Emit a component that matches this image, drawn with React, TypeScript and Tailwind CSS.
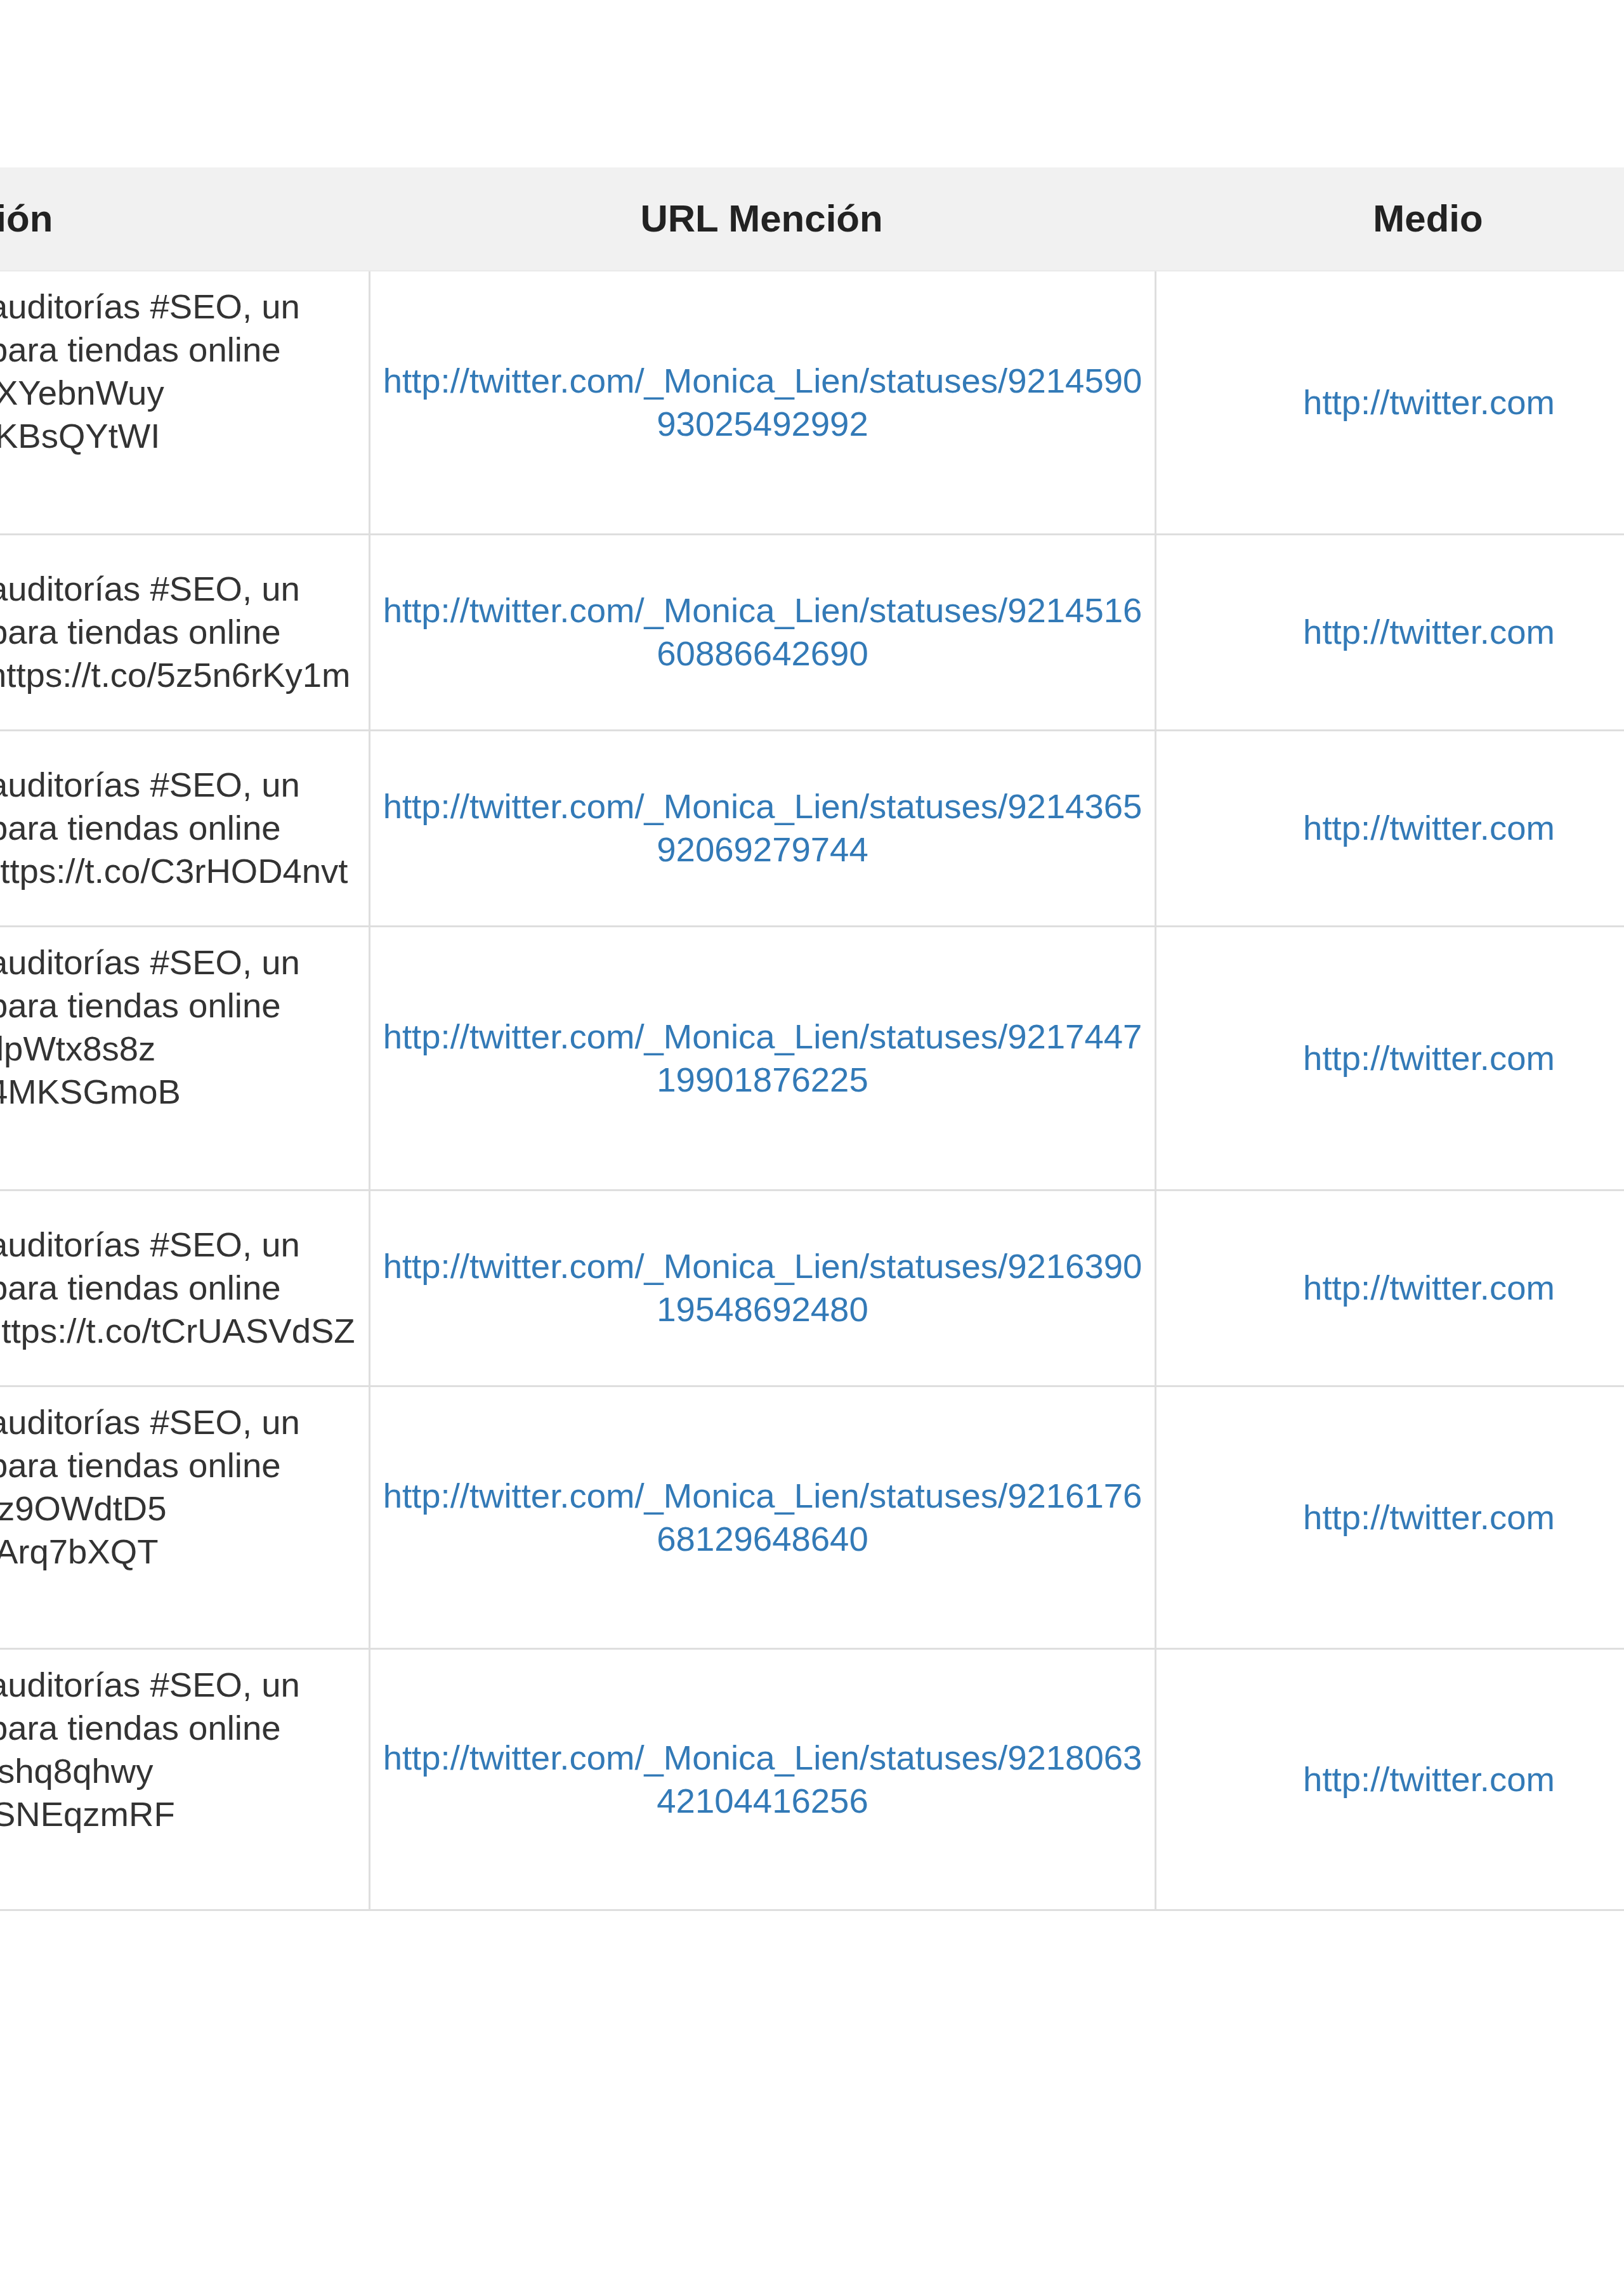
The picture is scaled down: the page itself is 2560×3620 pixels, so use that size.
type Line = { t: string; shift?: string };

type Row = {
  tall: boolean;
  h: string;
  lines: Line[];
  id: [string, string];
};

const base = "auditorías #SEO, un";
const base2 = "para tiendas online";

const rows: Row[] = [
  {
    tall: true,
    h: "h-[416px]",
    lines: [{ t: base }, { t: base2 }, { t: "XYebnWuy", shift: "ml-[10px]" }, { t: "KBsQYtWI", shift: "ml-[10px]" }],
    id: ["9214590", "93025492992"],
  },
  {
    tall: false,
    h: "h-[309px]",
    lines: [{ t: base }, { t: base2 }, { t: "https://t.co/5z5n6rKy1m", shift: "-ml-[2px]" }],
    id: ["9214516", "60886642690"],
  },
  {
    tall: false,
    h: "h-[309px]",
    lines: [{ t: base }, { t: base2 }, { t: "https://t.co/C3rHOD4nvt", shift: "-ml-[12px]" }],
    id: ["9214365", "92069279744"],
  },
  {
    tall: true,
    h: "h-[416px]",
    lines: [{ t: base }, { t: base2 }, { t: "lpWtx8s8z", shift: "ml-[12px]" }, { t: "4MKSGmoB" }],
    id: ["9217447", "19901876225"],
  },
  {
    tall: false,
    h: "h-[309px]",
    lines: [{ t: base }, { t: base2 }, { t: "https://t.co/tCrUASVdSZ", shift: "-ml-[10px]" }],
    id: ["9216390", "19548692480"],
  },
  {
    tall: true,
    h: "h-[414px]",
    lines: [{ t: base }, { t: base2 }, { t: "z9OWdtD5", shift: "ml-[14px]" }, { t: "Arq7bXQT", shift: "ml-[10px]" }],
    id: ["9216176", "68129648640"],
  },
  {
    tall: true,
    h: "h-[412px]",
    lines: [{ t: base }, { t: base2 }, { t: "shq8qhwy", shift: "ml-[14px]" }, { t: "SNEqzmRF", shift: "ml-[6px]" }],
    id: ["9218063", "42104416256"],
  },
];

const cols = "grid grid-cols-[999px_1239px_862px]";

export default function App() {
  return (
    <div className="w-full min-h-screen overflow-hidden bg-white font-['Liberation_Sans',Arial,sans-serif]">
      <div className="-ml-[418px] w-[3100px] pt-[264px]">
        {/* header */}
        <div className={`${cols} h-[164px] bg-[#f1f1f1] border-b-2 border-[#e9e9e9] text-[60px] font-bold text-[#222]`}>
          <div className="flex items-center pl-[258px]">Mención</div>
          <div className="flex items-center justify-center">URL Mención</div>
          <div className="flex items-center justify-center">Medio</div>
        </div>

        {rows.map((r) => (
          <div
            key={r.id[0]}
            className={`${cols} ${r.h} border-b-[3px] border-[#dedede] text-[54.5px] leading-[68px]`}
          >
            <div
              className={`flex flex-col pl-[400px] text-[#333] whitespace-nowrap ${
                r.tall ? "justify-start pt-[22px]" : "justify-center"
              }`}
            >
              {r.lines.map((l, i) => (
                <span key={i} className={l.shift ?? ""}>
                  {l.t}
                </span>
              ))}
            </div>
            <div className="flex flex-col items-center justify-center border-l-[3px] border-[#dedede] text-[#337ab7]">
              <span className="whitespace-nowrap">
                http://twitter.com/_Monica_Lien/statuses/{r.id[0]}
              </span>
              <span>{r.id[1]}</span>
            </div>
            <div className="flex items-center justify-center border-l-[3px] border-[#dedede] text-[#337ab7]">
              http://twitter.com
            </div>
          </div>
        ))}
      </div>
    </div>
  );
}
